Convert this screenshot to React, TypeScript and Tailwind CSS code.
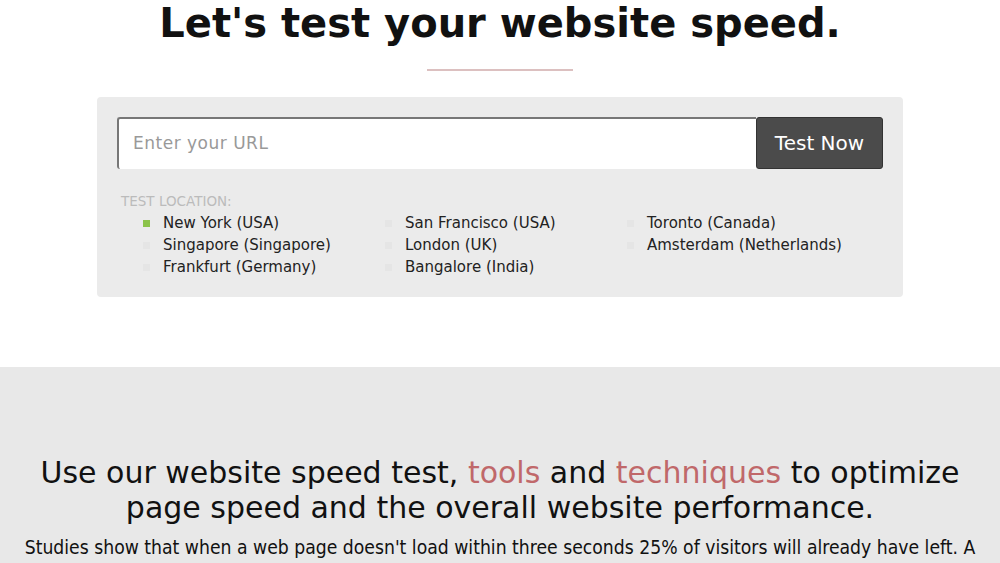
const locations = [
  ['New York (USA)', 'San Francisco (USA)', 'Toronto (Canada)'],
  ['Singapore (Singapore)', 'London (UK)', 'Amsterdam (Netherlands)'],
  ['Frankfurt (Germany)', 'Bangalore (India)', null],
];

function Location({ label, active }: { label: string; active?: boolean }) {
  return (
    <label className="flex items-center gap-[13px] h-[22px]">
      <span className={`w-[7px] h-[7px] ${active ? 'bg-[#8bc34a]' : 'bg-[#e5e5e5]'}`} />
      <span className="text-[15px] text-[#222]">{label}</span>
    </label>
  );
}

export default function App() {
  return (
    <div className="w-[1000px] h-[563px] overflow-hidden bg-white" style={{ fontFamily: '"DejaVu Sans", sans-serif' }}>
      <section className="flex flex-col items-center">
        <h1 className="text-[40px] font-bold leading-[44px] text-[#111] mt-[1px]">Let's test your website speed.</h1>
        <div className="w-[146px] h-[2px] bg-[#dcc0c0] mt-[24px]" />
        <div className="w-[806px] h-[200px] mt-[26px] bg-[#ebebeb] rounded-[4px] px-[20px] pt-[20px]">
          <div className="flex h-[52px]">
            <div className="flex-1 bg-white border-l-2 border-t-2 border-[#777] rounded-l-[3px] flex items-center pl-[14px]">
              <span className="text-[17px] text-[#999] tracking-[0.5px]">Enter your URL</span>
            </div>
            <button className="w-[127px] bg-[#4b4b4b] text-white text-[20px] rounded-[3px] border border-[#333]">Test Now</button>
          </div>
          <div className="mt-[25px] pl-[4px] text-[13.5px] text-[#bbb] uppercase leading-[15px]">Test Location:</div>
          <div className="mt-[3px] pl-[26px] flex flex-col">
            {locations.map((row, i) => (
              <div key={i} className="grid grid-cols-[242px_242px_1fr]">
                {row.map((loc, j) => (loc ? <Location key={j} label={loc} active={loc === 'New York (USA)'} /> : <div key={j} />))}
              </div>
            ))}
          </div>
        </div>
      </section>
      <section className="mt-[70px] bg-[#e8e8e8] h-[200px] flex flex-col items-center pt-[88px]">
        <h2 className="text-[30px] leading-[35px] text-[#111] text-center w-[940px]">
          Use our website speed test, <span className="text-[#c0686a]">tools</span> and{' '}
          <span className="text-[#c0686a]">techniques</span> to optimize page speed and the overall website performance.
        </h2>
        <p
          className="mt-[11px] text-[19.2px] leading-[24px] text-[#111] text-center whitespace-nowrap"
          style={{ fontFamily: '"DejaVu Sans Condensed", "DejaVu Sans", sans-serif' }}
        >
          Studies show that when a web page doesn't load within three seconds 25% of visitors will already have left. A
        </p>
      </section>
    </div>
  );
}
